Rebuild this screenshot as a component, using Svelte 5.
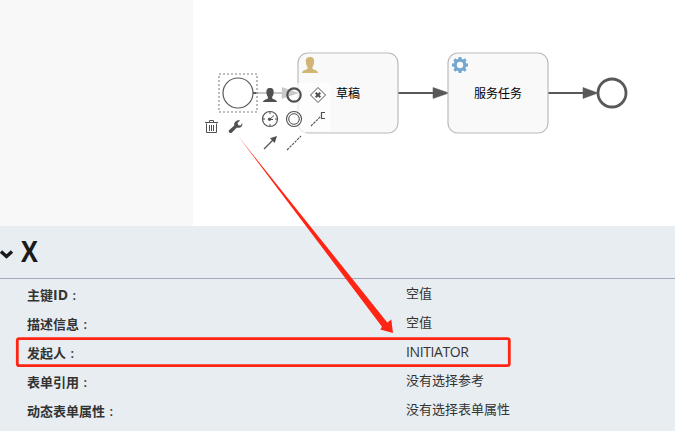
<script>
  const rows = [
    ['主键', 'ID', '空值'],
    ['描述信息', '', '空值'],
    ['发起人', '', 'INITIATOR'],
    ['表单引用', '', '没有选择参考'],
    ['动态表单属性', '', '没有选择表单属性']
  ];
  const teeth = [0, 45, 90, 135, 180, 225, 270, 315];
  const ticks = [0, 90, 180, 270];
  const isLatin = (text) => /^[A-Z]+$/.test(text);
</script>

<div class="editor">
  <div class="workspace">
    <aside></aside>
    <main>
      <svg class="canvas" width="482" height="226" viewBox="193 0 482 226">
        <defs>
          <path id="user" d="M8 0C4.500 0 3.700 2.200 3.900 5c.1 2.500.9 4 1.700 5v1.600c-.4 1.200-5.300 1.400-5.600 4.400h16c-.3-3-5.200-3.200-5.600-4.400V10c.8-1 1.600-2.500 1.700-5C12.300 2.200 11.500 0 8 0z" />
        </defs>
        <g fill="#585858" stroke="#585858">
          <path d="M253 93H285M398 93H435M548 93H585" stroke-width="2" />
          <path d="M282 87.500L298 93 282 98.500zM433 87.500L449 93 433 98.500zM583 87.500L598 93 583 98.500z" stroke-width=".5" />
        </g>
        <g fill="#f9f9f9" stroke="#bbb" stroke-width="1.200">
          <rect x="298" y="53" width="100" height="80" rx="10" />
          <rect x="448" y="53" width="100" height="80" rx="10" />
        </g>
        <path d="M282 87.500L298 93 282 98.500z" fill="#585858" />
        <use href="#user" x="302" y="57" fill="#d1b575" />
        <g transform="translate(460 65)" fill="#72a7d0">
          {#each teeth as a}
            <path d="M-1.800-5L-1.400-8H1.400L1.800-5z" transform="rotate({a})" />
          {/each}
          <circle r="4.700" fill="none" stroke="#72a7d0" stroke-width="3" />
        </g>
        <circle cx="238" cy="93" r="15" fill="#fff" stroke="#585858" stroke-width="1.200" />
        <circle cx="612" cy="93" r="14" fill="#fff" stroke="#585858" stroke-width="2.800" />
        <rect x="219" y="74" width="38" height="38" fill="none" stroke="#aaa" stroke-width="1.600" stroke-dasharray="2 2" />
        <path d="M258 83H330V131H306V155H258zM199 115H247V139H199z" fill="#fff" fill-opacity=".68" />
        <text x="336" y="98">草稿</text>
        <text x="474" y="98">服务任务</text>

        <use href="#user" transform="translate(263 88) scale(.88)" fill="#505050" />
        <g fill="none" stroke="#505050" stroke-width="1">
          <circle cx="294" cy="95" r="6.700" stroke-width="2.200" />
          <path d="M318 87.500L325.500 95 318 102.500 310.500 95z" />
          <path d="M315.700 92.700L320.300 97.300M320.300 92.700L315.700 97.300" stroke-width="2" />
          <circle cx="270" cy="119" r="7.500" stroke-width="1.200" />
          {#each ticks as a}
            <path d="M270 112V114" transform="rotate({a} 270 119)" />
          {/each}
          <path d="M269 119.500H273M269.500 119.500L274 115.500" />
          <circle cx="269.500" cy="119.300" r="1.200" fill="#505050" />
          <circle cx="294" cy="119" r="7.500" stroke-width="1.100" />
          <circle cx="294" cy="119" r="5.300" />
          <path d="M311 126L321 116" stroke-dasharray="2.500 1" stroke-width="1.100" />
          <path d="M325 112.500H321.500V118.500H325" stroke-width="1.200" />
          <path d="M264 149L273 140" stroke-width="1.300" />
          <path d="M277 136L274.700 143 270 138.300z" fill="#505050" stroke="none" />
          <path d="M287 150L301 136" stroke-dasharray="2.600 1" stroke-width="1.100" />
          <path d="M205 122.500H218M209.500 122V120.500H213.500V122M206.500 123.500V132.500H216.500V123.500M209.500 125V131M211.500 125V131M213.500 125V131" />
        </g>
        <path d="M240.200 120.300L237.500 123 238.300 125.300 240.700 125.500 242.300 123C242.800 127 240 128.300 236.700 127.700L231.500 132.900C229.700 133.700 228 132 229 130.300L234.300 125.500C233.700 122 236.500 119.500 240.200 120.300z" fill="#505050" />
      </svg>
    </main>
  </div>

  <section class="properties">
    <header>
      <svg width="15" height="14" viewBox="0 0 15 14"><path d="M1 3.500L6.500 8.500 12 3.500" fill="none" stroke="#1a1a1a" stroke-width="3.400" /></svg>
      <h1>X</h1>
    </header>
    <dl>
      {#each rows as [label, latin, value]}
        <div class="row">
          <dt>{label}<b>{latin}</b><span>:</span></dt>
          <dd class:latin={isLatin(value)}>{value}</dd>
        </div>
      {/each}
    </dl>
  </section>

  <svg class="annotation" width="675" height="431" viewBox="0 0 675 431">
    <path d="M238 136L387.300 322.500 391.300 319.500 393 333 380.300 329.500 382 326.800z" fill="#ff2514" />
    <rect x="17.300" y="338.700" width="492" height="27" rx="2" fill="none" stroke="#ff2514" stroke-width="2.800" />
  </svg>
</div>

<style>
  .editor {
    position: relative;
    width: 675px;
    height: 431px;
    overflow: hidden;
    background: #fff;
    font-family: "Open Sans", "Noto Sans CJK SC", sans-serif;
  }
  .workspace { display: flex; height: 226px; }
  aside { width: 193px; background: #f8f8f8; }
  main { flex: 1; }
  .canvas { display: block; }
  .canvas text { font: 12px "Noto Sans CJK SC", sans-serif; fill: #000; }
  .properties { height: 205px; background: #e8edf1; color: #333; }
  header {
    display: flex;
    align-items: center;
    box-sizing: border-box;
    height: 53px;
    border-bottom: 1px solid #a3aabd;
  }
  header svg { margin-top: 5px; }
  h1 {
    margin: -2px 0 0 6px;
    font-size: 28px;
    line-height: 36px;
    font-weight: 700;
    color: #1a1a1a;
    transform: scaleX(0.9);
    transform-origin: left;
  }
  dl { margin: 0; padding: 0 0 0 27px; }
  .row { display: flex; height: 29px; font-size: 13px; line-height: 29px; }
  dt { width: 379px; font-weight: 600; padding-top: 2px; }
  dt b { font-size: 14px; font-weight: 700; line-height: 1; }
  dt span { margin-left: 4.500px; }
  dd { margin: 0; }
  dd.latin { font-size: 14px; letter-spacing: -0.4px; }
  .annotation { position: absolute; inset: 0; pointer-events: none; }
</style>
